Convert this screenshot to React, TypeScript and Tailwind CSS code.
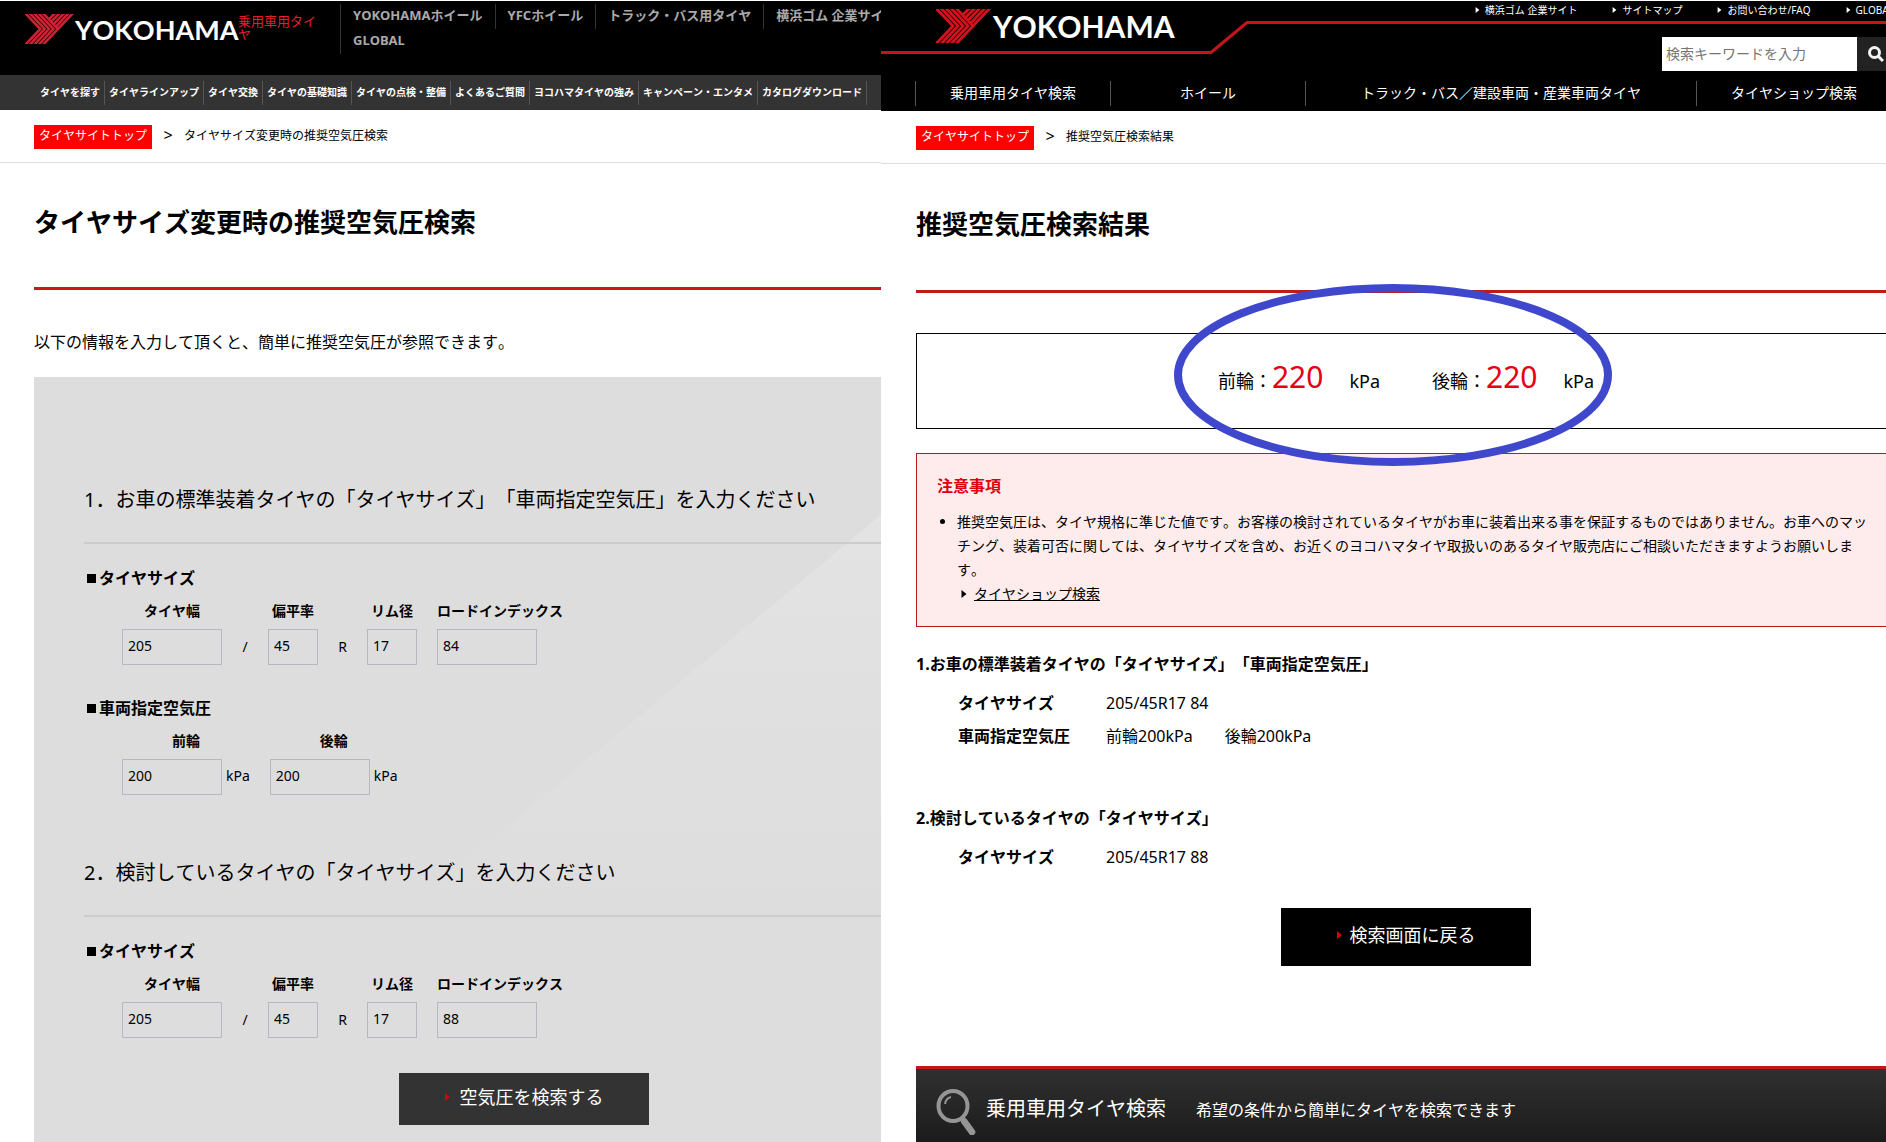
import { type ReactNode } from 'react'

const utilityLinks = ['YOKOHAMAホイール', 'YFCホイール', 'トラック・バス用タイヤ', '横浜ゴム 企業サイト', 'GLOBAL']

const tireMenu = [
  'タイヤを探す',
  'タイヤラインアップ',
  'タイヤ交換',
  'タイヤの基礎知識',
  'タイヤの点検・整備',
  'よくあるご質問',
  'ヨコハマタイヤの強み',
  'キャンペーン・エンタメ',
  'カタログダウンロード',
]

const corporateLinks = ['横浜ゴム 企業サイト', 'サイトマップ', 'お問い合わせ/FAQ', 'GLOBAL']

const searchMenu = ['乗用車用タイヤ検索', 'ホイール', 'トラック・バス／建設車両・産業車両タイヤ', 'タイヤショップ検索']

function BrandMark({ className, color }: { className: string; color: string }) {
  return (
    <svg viewBox="0 0 56 34" className={className} fill="none" stroke={color} strokeWidth="2.9" aria-hidden="true">
      {[1, 6, 11, 16].map((x) => (
        <path key={x} d={`M${x - 2} -2 L${x + 16} 17 L${x - 2} 36`} />
      ))}
      <path d="M19 -2 L37 17 L19 36" />
      <path d="M37 17 L55 -2" />
      <path d="M34.5 14.5 L50 -2" />
      <path d="M32 11.5 L45 -2" />
      <path d="M29.5 8.5 L40 -2" />
      <path d="M27 5.5 L35 -2" />
    </svg>
  )
}

function Triangle({ className }: { className: string }) {
  return (
    <svg viewBox="0 0 5 8" className={className} fill="currentColor" aria-hidden="true">
      <path d="M0 0 L5 4 L0 8 Z" />
    </svg>
  )
}

function Breadcrumb({ current }: { current: string }) {
  return (
    <nav className="h-[52px] pt-[15px] flex items-start text-xs leading-[21px] whitespace-nowrap">
      <a href="#" className="bg-[#f00] text-white h-6 px-[5px]">タイヤサイトトップ</a>
      <span className="w-8 text-center text-base leading-[21px]">&gt;</span>
      <span>{current}</span>
    </nav>
  )
}

function StepTitle({ children }: { children: ReactNode }) {
  return <h2 className="border-b-2 border-[#ccc] pb-[26px] text-xl leading-8">{children}</h2>
}

function GroupTitle({ children }: { children: ReactNode }) {
  return (
    <h3 className="flex items-center gap-[3px] pl-[3px] font-bold leading-6">
      <span className="size-[9px] bg-black" />
      {children}
    </h3>
  )
}

function Field({ id, label, value, width, unit }: { id: string; label: string; value: string; width: string; unit?: string }) {
  return (
    <div className="flex flex-col items-center gap-[6px] text-sm">
      <label htmlFor={id} className="font-bold leading-6 whitespace-nowrap">{label}</label>
      <div className="flex items-center gap-1">
        <input id={id} defaultValue={value} className={`${width} h-9 border border-[#b7b7c1] px-[5px] pb-[3px]`} />
        {unit && <span className="pb-[2px]">{unit}</span>}
      </div>
    </div>
  )
}

function TireSize({ name, loadIndex }: { name: string; loadIndex: string }) {
  return (
    <div className="mt-[9px] ml-[38px] flex items-end">
      <Field id={`${name}-width`} label="タイヤ幅" value="205" width="w-[100px]" />
      <span className="w-[46px] text-center text-sm leading-9">/</span>
      <Field id={`${name}-ratio`} label="偏平率" value="45" width="w-[50px]" />
      <span className="w-[49px] text-center text-sm leading-9">R</span>
      <Field id={`${name}-rim`} label="リム径" value="17" width="w-[50px]" />
      <div className="ml-5 flex flex-col gap-[6px] text-sm">
        <label htmlFor={`${name}-load`} className="font-bold leading-6">ロードインデックス</label>
        <input id={`${name}-load`} defaultValue={loadIndex} className="w-[100px] h-9 border border-[#b7b7c1] px-[5px] pb-[3px]" />
      </div>
    </div>
  )
}

function SearchForm() {
  return (
    <section className="min-w-0 flex flex-col overflow-hidden">
      <header className="h-[74px] bg-black flex overflow-hidden">
        <a href="#" className="flex w-[237px] shrink-0 items-start pl-[25px] pt-[13px]">
          <BrandMark className="w-[50px] h-[30px] shrink-0" color="#cf2233" />
          <span className="font-['Lato',sans-serif] font-bold text-[27px] leading-8 text-white">YOKOHAMA</span>
        </a>
        <p className="mt-[2px] w-[103px] shrink-0 pt-3 pr-5 pl-px text-[13px] leading-[13px] text-[#e0202e]">乗用車用タイヤ</p>
        <ul className="mt-[3px] h-[50px] w-[620px] shrink-0 flex flex-wrap border-l border-[#333] text-[13px] font-bold text-[#aaa]">
          {utilityLinks.map((text) => (
            <li key={text} className="h-[25px] border-r border-[#333] px-3 leading-[23px] whitespace-nowrap last:border-r-0">
              <a href="#">{text}</a>
            </li>
          ))}
        </ul>
      </header>
      <nav className="h-[35px] bg-[#333] pl-9">
        <ul className="flex h-full items-center text-[10px] font-bold text-white">
          {tireMenu.map((text) => (
            <li key={text} className="h-6 shrink-0 border-r border-[#555] px-1 leading-[23px] whitespace-nowrap">
              <a href="#">{text}</a>
            </li>
          ))}
        </ul>
      </nav>
      <div className="pl-[34px] border-b border-[#ddd]">
        <Breadcrumb current="タイヤサイズ変更時の推奨空気圧検索" />
      </div>
      <main className="ml-[34px] w-[980px] grow flex flex-col">
        <h1 className="border-b-3 border-[#c8161d] pt-[39px] pb-[45px] text-[26px] font-bold leading-10">タイヤサイズ変更時の推奨空気圧検索</h1>
        <p className="mt-10 leading-6">以下の情報を入力して頂くと、簡単に推奨空気圧が参照できます。</p>
        <form className="relative mt-[23px] grow bg-[#ddd] pt-[107px] pb-4" onSubmit={(e) => e.preventDefault()}>
          <div className="absolute top-[27px] right-0 h-[500px] w-[600px] bg-linear-to-b from-[#e5e5e5] to-[#ddd] [clip-path:polygon(100%_0,100%_100%,0_100%)]" />
          <div className="relative pl-[50px]">
            <StepTitle>1．お車の標準装着タイヤの「タイヤサイズ」「車両指定空気圧」を入力ください</StepTitle>
            <div className="mt-[22px]">
              <GroupTitle>タイヤサイズ</GroupTitle>
              <TireSize name="standard" loadIndex="84" />
            </div>
            <div className="mt-[31px]">
              <GroupTitle>車両指定空気圧</GroupTitle>
              <div className="mt-[9px] ml-[38px] flex gap-5">
                <Field id="front" label="前輪" value="200" width="w-[100px]" unit="kPa" />
                <Field id="rear" label="後輪" value="200" width="w-[100px]" unit="kPa" />
              </div>
            </div>
            <div className="mt-[62px]">
              <StepTitle>2．検討しているタイヤの「タイヤサイズ」を入力ください</StepTitle>
            </div>
            <div className="mt-[22px]">
              <GroupTitle>タイヤサイズ</GroupTitle>
              <TireSize name="candidate" loadIndex="88" />
            </div>
          </div>
          <button className="relative mx-auto mt-[35px] flex h-[52px] w-[250px] items-center justify-center gap-[10px] bg-[#333] pb-1 text-lg text-white">
            <Triangle className="h-2 w-[5px] text-[#d7000f]" />
            空気圧を検索する
          </button>
        </form>
      </main>
    </section>
  )
}

function SearchResult() {
  return (
    <section className="min-w-0 flex flex-col overflow-hidden">
      <header className="relative h-[110px] bg-black text-white overflow-hidden">
        {/* red line that steps up to the right of the logo */}
        <svg className="absolute top-0 left-0 h-[60px] w-full" fill="none" stroke="#c2161c" strokeWidth="3" aria-hidden="true">
          <path d="M0 51.5 H330 L366 21.5 H3000" strokeLinejoin="round" />
        </svg>
        <div className="relative flex h-[74px] justify-between">
          <a href="#" className="flex shrink-0 items-start pl-[55px] pt-2">
            <BrandMark className="w-[56px] h-[34px]" color="#d0131d" />
            <span className="pl-px font-['Lato',sans-serif] font-bold text-[30px] leading-[34px]">YOKOHAMA</span>
          </a>
          <div className="-mr-6 flex flex-col items-end">
            <ul className="mr-4 flex gap-[35px] text-[10px] leading-[18px]">
              {corporateLinks.map((text) => (
                <li key={text} className="whitespace-nowrap">
                  <a href="#" className="flex items-center gap-[5px]">
                    <Triangle className="h-[6px] w-[5px]" />
                    {text}
                  </a>
                </li>
              ))}
            </ul>
            <form className="mt-[18px] flex" onSubmit={(e) => e.preventDefault()}>
              <input
                type="search"
                aria-label="検索キーワード"
                placeholder="検索キーワードを入力"
                className="h-[34px] w-[195px] bg-white px-1 pb-[2px] text-sm text-black placeholder:text-[#757575]"
              />
              <button aria-label="検索" className="h-[34px] w-[53px] bg-[#222] pl-[11px]">
                <svg viewBox="0 0 16 16" className="size-4" fill="none" stroke="#f2f2f2" strokeWidth="3" aria-hidden="true">
                  <circle cx="6.5" cy="6.5" r="5" />
                  <path d="M10 10 L15 15" />
                </svg>
              </button>
            </form>
          </div>
        </div>
        <nav className="relative flex h-9 items-center pl-[34px]">
          <ul className="grid shrink-0 grid-cols-[195px_195px_391px_195px] text-sm">
            {searchMenu.map((text) => (
              <li key={text} className="h-[25px] border-l border-[#555] text-center leading-[23px] whitespace-nowrap">
                <a href="#">{text}</a>
              </li>
            ))}
          </ul>
        </nav>
      </header>
      <div className="pl-[35px] border-b border-[#ddd]">
        <Breadcrumb current="推奨空気圧検索結果" />
      </div>
      <main className="ml-[35px] w-[980px] grow flex flex-col">
        <h1 className="border-b-3 border-[#c01a1a] pt-10 pb-[46px] text-[26px] font-bold leading-10">推奨空気圧検索結果</h1>
        <div className="relative mt-10 flex h-24 items-center justify-center border border-black pb-2 text-lg">
          <div className="flex items-baseline gap-[52px]">
            <p>前輪：<span className="mr-[26px] text-3xl text-[#e60012]">220</span>kPa</p>
            <p>後輪：<span className="mr-[26px] text-3xl text-[#e60012]">220</span>kPa</p>
          </div>
          <svg viewBox="0 0 440 182" className="absolute -top-[50px] left-[256px] h-[182px] w-[440px]" aria-hidden="true">
            <ellipse cx="220" cy="91" rx="215" ry="87" fill="none" stroke="#3f48cc" strokeWidth="8" />
          </svg>
        </div>
        <div className="mt-6 border border-[#b81c22] bg-[#feecec] p-5">
          <h2 className="font-bold leading-6 text-[#dc0010]">注意事項</h2>
          <ul className="mt-3 list-disc pl-5 text-sm leading-6">
            <li>
              推奨空気圧は、タイヤ規格に準じた値です。お客様の検討されているタイヤがお車に装着出来る事を保証するものではありません。お車へのマッチング、装着可否に関しては、タイヤサイズを含め、お近くのヨコハマタイヤ取扱いのあるタイヤ販売店にご相談いただきますようお願いします。
              <div className="flex items-center gap-[7px] pl-1">
                <Triangle className="h-2 w-[6px]" />
                <a href="#" className="underline">タイヤショップ検索</a>
              </div>
            </li>
          </ul>
        </div>
        <h2 className="mt-[25px] font-bold leading-6">1.お車の標準装着タイヤの「タイヤサイズ」「車両指定空気圧」</h2>
        <dl className="mt-[15px] ml-[42px] grid grid-cols-[148px_1fr] gap-y-[9px] leading-6">
          <dt className="font-bold">タイヤサイズ</dt>
          <dd>205/45R17 84</dd>
          <dt className="font-bold">車両指定空気圧</dt>
          <dd className="flex gap-8"><span>前輪200kPa</span><span>後輪200kPa</span></dd>
        </dl>
        <h2 className="mt-[58px] font-bold leading-6">2.検討しているタイヤの「タイヤサイズ」</h2>
        <dl className="mt-[15px] ml-[42px] grid grid-cols-[148px_1fr] leading-6">
          <dt className="font-bold">タイヤサイズ</dt>
          <dd>205/45R17 88</dd>
        </dl>
        <button className="mx-auto mt-[39px] flex h-[58px] w-[250px] items-center justify-center gap-2 bg-black pb-1 text-lg text-white">
          <Triangle className="h-2 w-[5px] text-[#d7000f]" />
          検索画面に戻る
        </button>
        <div className="mt-[100px] flex grow items-start border-t-3 border-[#c8161d] bg-linear-to-b from-[#303030] to-[#1c1c1c] pt-5 pl-5 text-white">
          <svg viewBox="0 0 40 46" className="h-[46px] w-10" fill="none" stroke="#959595" aria-hidden="true">
            <ellipse cx="17" cy="17" rx="14.5" ry="15" strokeWidth="4" />
            <path d="M9 15 Q10 9 15 8" strokeWidth="2" />
            <path d="M28 32 L36 43" strokeWidth="6.5" strokeLinecap="round" />
          </svg>
          <h2 className="ml-[10px] text-xl leading-10">乗用車用タイヤ検索</h2>
          <p className="ml-[30px] leading-[43px]">希望の条件から簡単にタイヤを検索できます</p>
        </div>
      </main>
    </section>
  )
}

export default function App() {
  return (
    <div className="grid min-h-screen grid-cols-[881fr_1005fr] overflow-hidden bg-white pt-px text-base text-black font-['Noto_Sans','Noto_Sans_CJK_JP',sans-serif] [font-kerning:none] [text-spacing-trim:space-all]">
      <SearchForm />
      <SearchResult />
    </div>
  )
}
